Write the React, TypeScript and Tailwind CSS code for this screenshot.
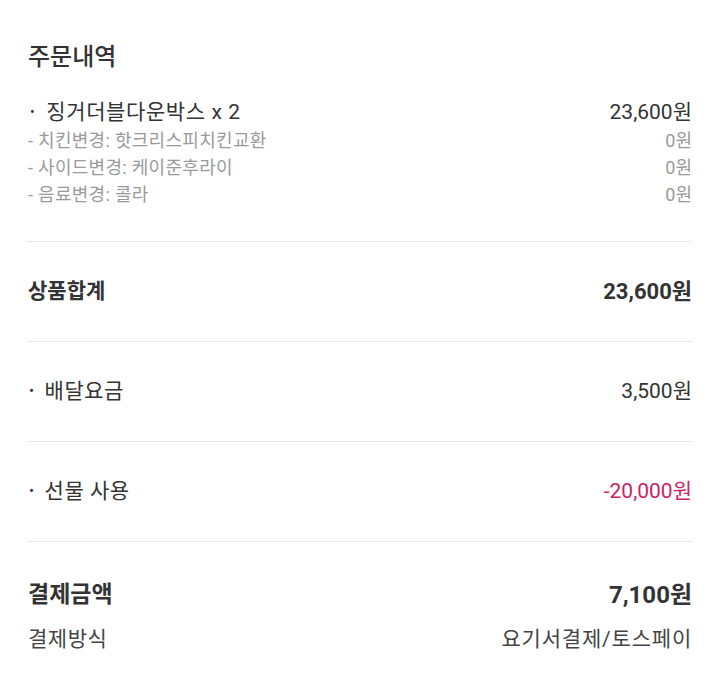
import React from "react";

const font = { fontFamily: "Roboto, 'Noto Sans CJK KR', 'Noto Sans', sans-serif" };

function Row({ label, value, bold, bullet, valueClass }: { label: string; value: string; bold?: boolean; bullet?: boolean; valueClass?: string }) {
  return (
    <div className="flex h-[99px] items-center justify-between">
      <div className={`flex items-center text-[21px] text-[#333] ${bold ? "font-bold" : "tracking-[0.5px]"}`}>
        {bullet && <span className="ml-[1px] mr-[10px] text-[15px]">•</span>}
        <span>{label}</span>
      </div>
      <div className={`${bold ? "text-[22px] font-bold" : "text-[21px]"} ${valueClass ?? "text-[#333]"}`}>{value}</div>
    </div>
  );
}

export default function App() {
  return (
    <div className="min-h-[691px] w-[720px] bg-white px-[28px] pt-[42px]" style={font}>
      <div className="text-[24px] font-medium leading-[30px] text-[#333]">주문내역</div>
      <div className="mt-[26px] flex items-center justify-between leading-[28px]">
        <div className="flex items-center text-[21px] tracking-[0.6px] text-[#333]">
          <span className="ml-[2px] mr-[11px] text-[14px]">•</span>
          <span>징거더블다운박스 x 2</span>
        </div>
        <div className="text-[21px] text-[#333]">23,600원</div>
      </div>
      <div className="mt-[1px] flex items-center justify-between text-[18px] leading-[27px] text-[#9a9a9a]">
        <span className="tracking-[0.3px]">- 치킨변경: 핫크리스피치킨교환</span>
        <span>0원</span>
      </div>
      <div className="flex items-center justify-between text-[18px] leading-[27px] text-[#9a9a9a]">
        <span className="tracking-[0.3px]">- 사이드변경: 케이준후라이</span>
        <span>0원</span>
      </div>
      <div className="flex items-center justify-between text-[18px] leading-[27px] text-[#9a9a9a]">
        <span className="tracking-[0.3px]">- 음료변경: 콜라</span>
        <span>0원</span>
      </div>
      <div className="mt-[33px] border-t border-dotted border-[#d4d4d4]" />
      <Row label="상품합계" value="23,600원" bold />
      <div className="border-t border-[#e8e8e8]" />
      <Row label="배달요금" value="3,500원" bullet />
      <div className="border-t border-[#e8e8e8]" />
      <Row label="선물 사용" value="-20,000원" bullet valueClass="text-[#cc2266]" />
      <div className="border-t border-[#e8e8e8]" />
      <div className="mt-[38px] flex items-center justify-between leading-[30px]">
        <span className="text-[23px] font-bold text-[#333]">결제금액</span>
        <span className="text-[24px] font-bold text-[#333]">7,100원</span>
      </div>
      <div className="mt-[15px] flex items-center justify-between leading-[28px]">
        <span className="text-[21px] tracking-[0.5px] text-[#444]">결제방식</span>
        <span className="text-[21px] tracking-[0.8px] text-[#444]">요기서결제/토스페이</span>
      </div>
    </div>
  );
}
